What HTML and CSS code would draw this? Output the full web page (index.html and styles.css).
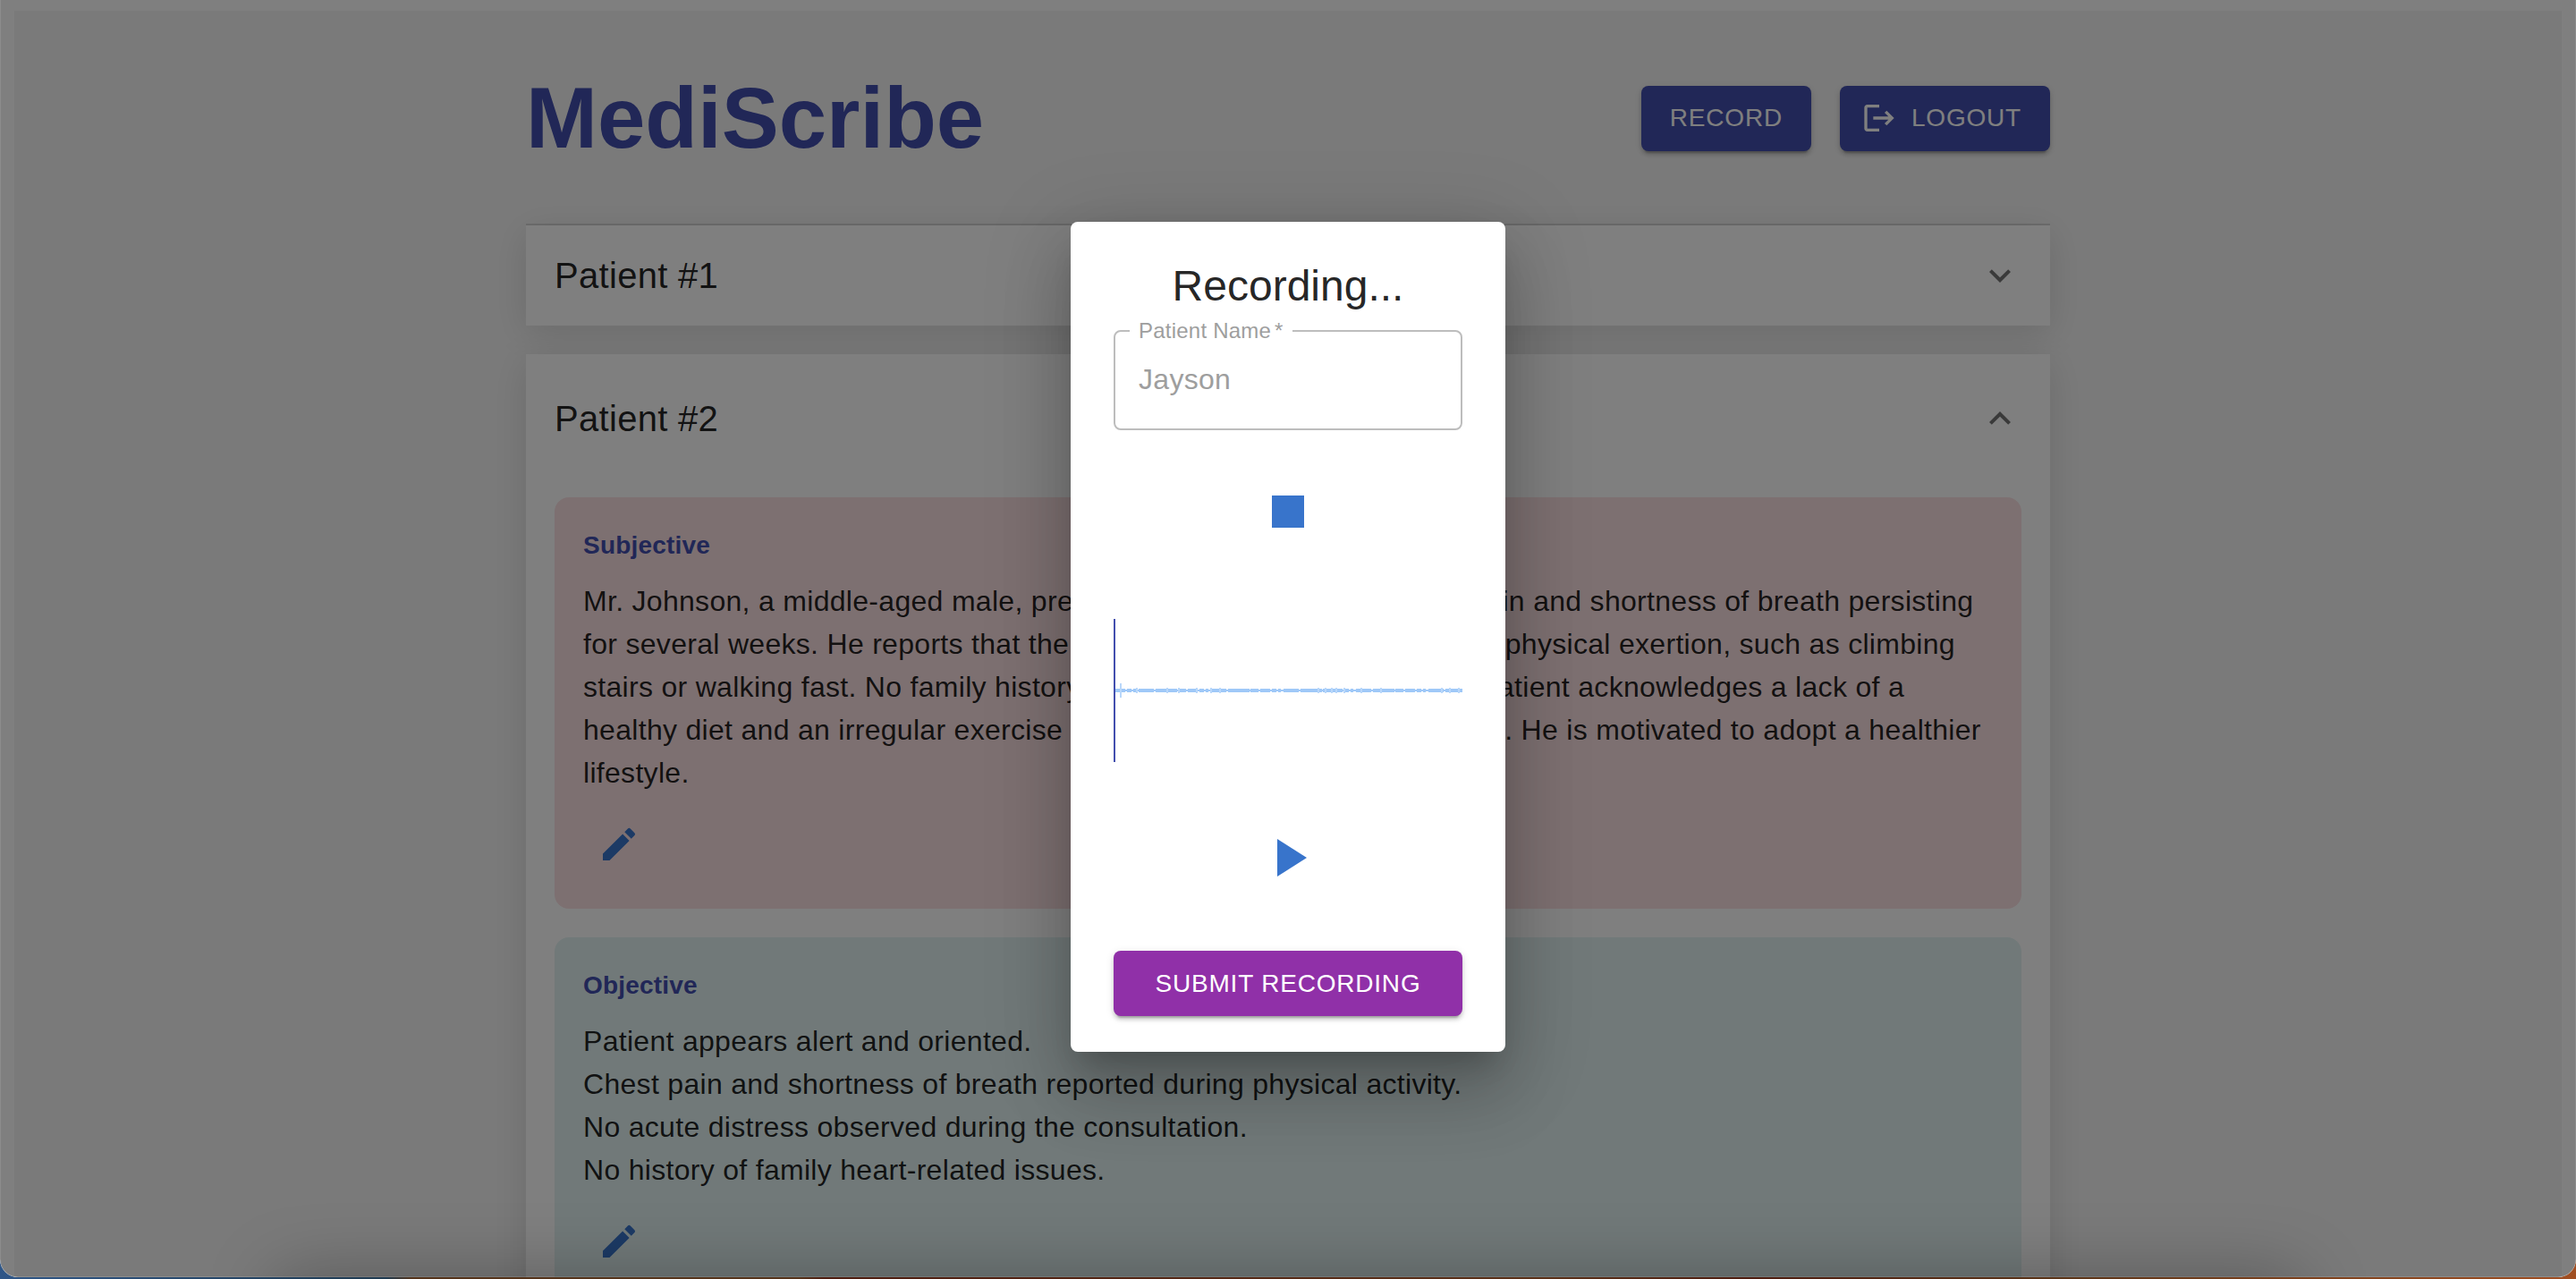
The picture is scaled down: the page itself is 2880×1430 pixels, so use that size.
FILE: index.html
```html
<!DOCTYPE html>
<html lang="en">
<head>
    <meta charset="UTF-8">
    <meta name="viewport" content="width=device-width, initial-scale=1.0">
    <title>MediScribe</title>
    <link rel="stylesheet" href="styles.css">
</head>
<body>
    <div class="window">
        <div class="app">
            <div class="container">
                <header class="header">
                    <h1>MediScribe</h1>
                    <div class="header-buttons">
                        <button class="btn">Record</button>
                        <button class="btn btn-icon">
                            <svg viewBox="0 0 24 24"><path d="m17 7-1.410 1.410L18.170 11H8v2h10.170l-2.580 2.580L17 17l5-5zM4 5h8V3H4c-1.100 0-2 .9-2 2v14c0 1.100.9 2 2 2h8v-2H4V5z" /></svg>
                            Logout
                        </button>
                    </div>
                </header>

                <section class="accordion first">
                    <div class="summary">
                        <h2>Patient #1</h2>
                        <svg viewBox="0 0 24 24"><path d="M16.590 8.590 12 13.170 7.410 8.590 6 10l6 6 6-6z" /></svg>
                    </div>
                </section>

                <section class="accordion expanded">
                    <div class="summary">
                        <h2>Patient #2</h2>
                        <svg viewBox="0 0 24 24"><path d="m12 8-6 6 1.410 1.410L12 10.830l4.590 4.580L18 14z" /></svg>
                    </div>
                    <div class="details">
                        <div class="note subjective">
                            <h3>Subjective</h3>
                            <p>Mr. Johnson, a middle-aged male, presents with complaints of chest pain and shortness of breath persisting<br>
                            for several weeks. He reports that the pain frequently intensifies during physical exertion, such as climbing<br>
                            stairs or walking fast. No family history of heart disease is noted. The patient acknowledges a lack of a<br>
                            healthy diet and an irregular exercise routine over the past nine months. He is motivated to adopt a healthier<br>
                            lifestyle.</p>
                            <button class="edit"><svg viewBox="0 0 24 24"><path d="M3 17.250V21h3.750L17.810 9.940l-3.750-3.750L3 17.250zM20.710 7.040c.39-.39.39-1.020 0-1.410l-2.340-2.340a.9959.9959 0 0 0-1.410 0l-1.830 1.830 3.750 3.750 1.830-1.830z" /></svg></button>
                        </div>
                        <div class="note objective">
                            <h3>Objective</h3>
                            <p>Patient appears alert and oriented.<br>
                            Chest pain and shortness of breath reported during physical activity.<br>
                            No acute distress observed during the consultation.<br>
                            No history of family heart-related issues.</p>
                            <button class="edit"><svg viewBox="0 0 24 24"><path d="M3 17.250V21h3.750L17.810 9.940l-3.750-3.750L3 17.250zM20.710 7.040c.39-.39.39-1.020 0-1.410l-2.340-2.340a.9959.9959 0 0 0-1.410 0l-1.830 1.830 3.750 3.750 1.830-1.830z" /></svg></button>
                        </div>
                    </div>
                </section>
            </div>
        </div>

        <div class="backdrop">
            <div class="modal">
                <h2>Recording...</h2>
                <fieldset class="field">
                    <legend>Patient Name<span>*</span></legend>
                    <div class="value">Jayson</div>
                </fieldset>
                <button class="control"><svg viewBox="0 0 24 24"><path d="M6 6h12v12H6z" /></svg></button>
                <svg class="wave" viewBox="0 0 390 160">
                    <path class="wave-line" d="M2 80H390" />
                    <path class="wave-peaks" d="M2 80H390" />
                    <path class="wave-spikes" d="M8 72v16M26 77v6M60 77v6M73 77v6M93 77v6M109 77v6M119 77v6M229 77v6M237 77v6M244 77v6M249 77v6M258 77v6M277 77v6M299 77v6M367 77v6M376 77v6M386 77v6" />
                    <path class="wave-cursor" d="M1 0V160" />
                </svg>
                <button class="control play"><svg viewBox="0 0 24 24"><path d="M8 5v14l11-7z" /></svg></button>
                <button class="btn submit">Submit Recording</button>
            </div>
        </div>
    </div>
</body>
</html>
```

FILE: styles.css
```css
:root {
    --primary-color: #424eae;
    --icon-color: #3874cb;
    --text-color: rgba(0, 0, 0, 0.87);
}

* {
    box-sizing: border-box;
    margin: 0;
    padding: 0;
}

body {
    font-family: "Liberation Sans", Arial, sans-serif;
    font-size: 32px;
    color: var(--text-color);
    height: 1430px;
    overflow: hidden;
    background: linear-gradient(to right, #2f5687 0, #1f3a50 15%, #54331a 16%, #54331a 31%, #4d1c10 32%, #5a3018 60%, #4d1c10 68%, #5a3418 80%, #a04e22 100%);
}

.window {
    position: relative;
    height: 1428px;
    padding: 12px 16px 0;
    background: white;
    border-radius: 0 0 20px 20px;
    overflow: hidden;
}

/* soft shade rising from the bottom edge */
.window::after {
    content: "";
    position: absolute;
    left: 310px;
    right: 310px;
    top: 100%;
    height: 100px;
    box-shadow: 0 0 80px rgba(0,0,0,0.28);
}

.app {
    height: 1416px;
    background: #f5f5f5;
}

.container {
    width: 1800px;
    margin: 0 auto;
    padding: 64px 48px;
}

.header {
    display: flex;
    justify-content: space-between;
    align-items: center;
    margin-bottom: 64px;
}

h1 {
    font-size: 96px;
    line-height: 112px;
    color: var(--primary-color);
}

.header-buttons {
    display: flex;
    gap: 32px;
}

.btn {
    display: flex;
    align-items: center;
    justify-content: center;
    height: 73px;
    padding: 0 32px;
    border: none;
    border-radius: 8px;
    background: var(--primary-color);
    color: white;
    font: 28px "Liberation Sans", Arial, sans-serif;
    letter-spacing: 0.02857em;
    text-transform: uppercase;
    box-shadow: 0 6px 2px -4px rgba(0,0,0,0.2), 0 4px 4px rgba(0,0,0,0.14), 0 2px 10px rgba(0,0,0,0.12);
}

.btn-icon svg {
    width: 40px;
    height: 40px;
    margin: 0 16px 0 -8px;
    fill: white;
}

.accordion {
    position: relative;
    margin-bottom: 32px;
    background: white;
    box-shadow: 0 8px 40px rgba(0,0,0,0.12);
}

.first::before {
    content: "";
    position: absolute;
    top: -2px;
    left: 0;
    right: 0;
    height: 2px;
    background: rgba(0,0,0,0.12);
}

.summary {
    display: flex;
    justify-content: space-between;
    align-items: center;
    height: 112px;
    padding: 0 32px;
}

.expanded .summary {
    height: 144px;
}

.summary h2 {
    font-size: 40px;
    font-weight: 400;
    line-height: 64px;
    letter-spacing: 0.0075em;
}

.summary svg {
    width: 48px;
    height: 48px;
    fill: rgba(0,0,0,0.54);
}

.details {
    padding: 16px 32px 32px;
}

.note {
    padding: 32px;
    margin-bottom: 32px;
    border-radius: 16px;
}

.subjective {
    background: #fae1e3;
}

.objective {
    background: #e2f3f3;
}

.note h3 {
    font-size: 28px;
    line-height: 44px;
    margin-bottom: 16px;
    letter-spacing: 0.00714em;
    color: var(--primary-color);
}

.note p {
    line-height: 48px;
    letter-spacing: 0.00938em;
    white-space: nowrap;
}

.edit {
    display: flex;
    padding: 16px;
    margin-top: 16px;
    border: none;
    background: none;
}

.edit svg {
    width: 48px;
    height: 48px;
    fill: var(--icon-color);
}

.backdrop {
    position: absolute;
    inset: 0;
    background: rgba(0,0,0,0.5);
    border-radius: 0 0 20px 20px;
    box-shadow: inset 0 -1px rgba(255,255,255,0.15), inset 1px 0 rgba(255,255,255,0.1), inset -1px 0 rgba(255,255,255,0.1);
}

.modal {
    display: flex;
    flex-direction: column;
    width: 486px;
    height: 928px;
    margin: 248px auto 0;
    padding: 40px 48px;
    background: white;
    border-radius: 8px;
    box-shadow: 0 22px 30px -14px rgba(0,0,0,0.2), 0 48px 76px 6px rgba(0,0,0,0.14), 0 18px 92px 16px rgba(0,0,0,0.12);
}

.modal h2 {
    font-size: 48px;
    font-weight: 400;
    line-height: 64px;
    text-align: center;
}

.field {
    height: 125px;
    margin-top: 4px;
    padding: 0 26px;
    border: 2px solid #bdbdbd;
    border-radius: 8px;
    color: #9e9e9e;
}

.field legend {
    margin-left: -10px;
    padding: 0 10px;
    font-size: 24px;
    line-height: 28px;
    letter-spacing: 0.00938em;
}

.field legend span {
    margin-left: 4px;
}

.field .value {
    line-height: 81px;
    letter-spacing: 0.00938em;
}

.control {
    display: flex;
    align-self: center;
    margin: 31px 0 60px;
    padding: 24px;
    border: none;
    background: none;
}

.control svg {
    width: 72px;
    height: 72px;
    fill: var(--icon-color);
}

.control.play {
    margin: 47px 0 44px;
}

.wave {
    width: 390px;
    height: 160px;
    fill: none;
}

.wave-line {
    stroke: #9fc8f8;
    stroke-width: 2;
}

.wave-peaks {
    stroke: #9fc8f8;
    stroke-width: 4;
    stroke-dasharray: 11 2 5 2 3 3 17 2 24 1 9 2;
}

.wave-spikes {
    stroke: #b9d7fa;
    stroke-width: 2;
}

.wave-cursor {
    stroke: var(--primary-color);
    stroke-width: 2;
}

.submit {
    background: #9030a8;
}
```
